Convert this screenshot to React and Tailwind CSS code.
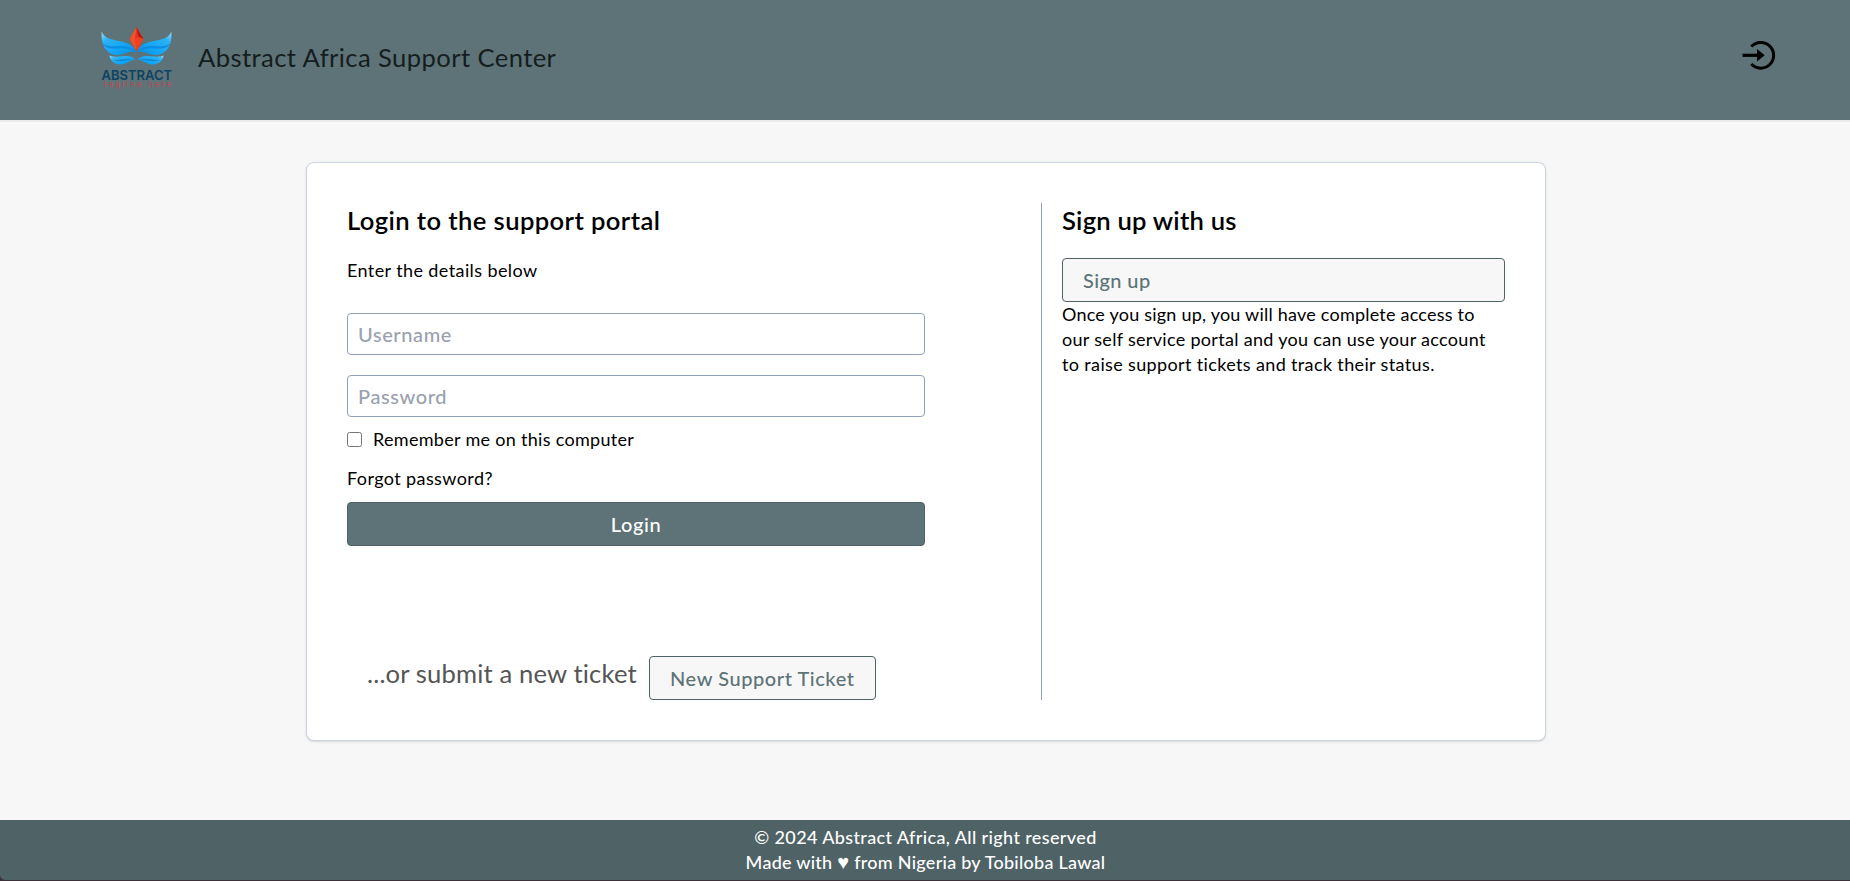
function Logo() {
  return (
    <svg className="h-[70px] w-[76px] shrink-0 tracking-normal" viewBox="-2 0 76 70" aria-label="Abstract">
      <defs>
        <linearGradient id="wing" x1="0" y1="0" x2="1" y2="1">
          <stop offset="0" stopColor="#9be2fb" />
          <stop offset="0.25" stopColor="#2cb2f5" />
          <stop offset="0.65" stopColor="#12a4f4" />
          <stop offset="1" stopColor="#0b8de4" />
        </linearGradient>
      </defs>
      <g id="w">
        <path d="M0.700 4.500C3 11 10 12.500 18 14C28 16 33 19 35 25.500C30 22.500 25 27.500 17 28C5 28.500 -0.500 17 0.700 4.500Z" fill="url(#wing)" />
        <path d="M1.500 16C6 21 13 18.500 21 19C29 19.500 33 22 35 25.500C29 21.500 24 21 17 21.500C9 22 4 21 1.500 16Z" fill="#0c8de0" />
        <path d="M8.500 28.500C14 31 22 28.500 27 29C31 29.500 33 31 34 33C29 32 25 38.500 18 37.500C12 36.500 9 33 8.500 28.500Z" fill="url(#wing)" />
        <path d="M11 33C17 34 24 30.500 34 33C27 31.500 20 36 11 33Z" fill="#0a86d4" />
      </g>
      <use href="#w" transform="translate(71 0) scale(-1 1)" />
      <path d="M35.500 0L42.300 12L35.500 24L28.700 12Z" fill="#e5361d" />
      <path d="M35.500 0L34 12L35.500 24L28.700 12Z" fill="#f4502b" />
      <path d="M35.500 0L42.300 12L37.500 10Z" fill="#b81912" />
      <path d="M34 12L37.500 10L42.300 12L35.500 24Z" fill="#f0401f" />
      <text x="0.500" y="52.700" textLength="70.500" lengthAdjust="spacingAndGlyphs" fill="#0e4263" className="font-['Inter',sans-serif] text-[13.300px] font-semibold">ABSTRACT</text>
      <text x="3" y="60" textLength="67" fill="#c6454c" className="font-['Inter',sans-serif] text-[7.500px]">tagline here</text>
    </svg>
  );
}

function LoginIcon() {
  return (
    <svg className="h-8 w-[34px]" viewBox="0 0 34 32" fill="none" aria-label="Sign in">
      <path d="M9.300 6.500A12.900 12.900 0 1 1 9.300 24.100" stroke="#000" strokeWidth="3" />
      <path d="M0.500 15.300H16" stroke="#000" strokeWidth="3.200" />
      <path d="M15 9L22.700 15.300L15 21.600Z" fill="#000" />
    </svg>
  );
}

function Field({ type, placeholder }) {
  return (
    <input
      type={type}
      placeholder={placeholder}
      className="block h-[42px] w-full rounded border border-slate-400 bg-white px-2.5 text-xl font-medium tracking-[0.6px] placeholder:text-gray-400"
    />
  );
}

export default function App() {
  return (
    <div className="flex h-[881px] flex-col bg-[#f7f7f7] font-['Lato',sans-serif] text-lg leading-[25px] tracking-[0.4px] text-black">
      <header className="flex h-[122px] shrink-0 items-start justify-between border-b-2 border-[#ebebeb] bg-[#5d7377] pr-[74px] pl-[99px]">
        <div className="flex pt-[27px]">
          <Logo />
          <h1 className="ml-[23px] pt-[10px] text-[25.600px] leading-[40px] tracking-[0.41px] whitespace-nowrap text-[#151d1e]">Abstract Africa Support Center</h1>
        </div>
        <a href="#" className="mt-10"><LoginIcon /></a>
      </header>

      <main className="flex flex-1 justify-center pt-10 pl-0.5">
        <section className="flex h-[579px] w-[1240px] rounded-lg border border-slate-300 bg-white p-10 shadow-sm">
          <div className="flex w-[694px] flex-col">
            <h2 className="mt-0.5 text-[25.600px] leading-[30px] font-semibold tracking-[0.400px]">Login to the support portal</h2>
            <p className="mt-[23px]">Enter the details below</p>
            <form className="mt-[30px] flex w-[578px] flex-col">
              <Field type="text" placeholder="Username" />
              <div className="h-5" />
              <Field type="password" placeholder="Password" />
              <label className="mt-2.5 flex items-center">
                <input type="checkbox" className="h-[15px] w-[15px]" />
                <span className="ml-[11px] tracking-[0.300px]">Remember me on this computer</span>
              </label>
              <a href="#" className="mt-3.5">Forgot password?</a>
              <button type="button" className="mt-[11px] h-11 rounded border border-[#4f6266] bg-[#5d7377] text-xl font-medium tracking-[0.600px] text-white">Login</button>
            </form>
            <div className="mt-auto flex items-start pl-5">
              <span className="text-[25.600px] leading-[34px] tracking-[0.150px] whitespace-nowrap text-[#555]">...or submit a new ticket</span>
              <a href="#" className="ml-3 flex h-11 w-[227px] items-center justify-center rounded border border-[#4f6266] bg-[#f7f7f7] text-xl font-medium tracking-[0.560px] text-[#5d7377]">New Support Ticket</a>
            </div>
          </div>
          <div className="flex flex-1 flex-col border-l border-slate-400 pl-5">
            <h2 className="mt-0.5 text-[25.600px] leading-[30px] font-semibold tracking-[0.220px]">Sign up with us</h2>
            <a href="#" className="mt-[23px] flex h-11 items-center rounded border border-[#4f6266] bg-[#f7f7f7] px-5 text-xl font-medium tracking-[0.400px] text-[#5d7377]">Sign up</a>
            <p className="whitespace-nowrap">
              <span className="tracking-[0.220px]">Once you sign up, you will have complete access to</span><br />
              <span className="tracking-[0.310px]">our self service portal and you can use your account</span><br />
              <span className="tracking-[0.360px]">to raise support tickets and track their status.</span>
            </p>
          </div>
        </section>
      </main>

      <footer className="h-[61px] shrink-0 bg-[#3a3238]">
        <div className="h-[60px] rounded-bl-[5px] bg-[#4f6266] pt-[5px] pl-px text-center font-medium text-white">
          <p className="tracking-[0.380px]">© 2024 Abstract Africa, All right reserved</p>
          <p className="tracking-[0.260px]">Made with <span className="text-[20px] leading-none">♥</span> from Nigeria by Tobiloba Lawal</p>
        </div>
      </footer>
    </div>
  );
}
